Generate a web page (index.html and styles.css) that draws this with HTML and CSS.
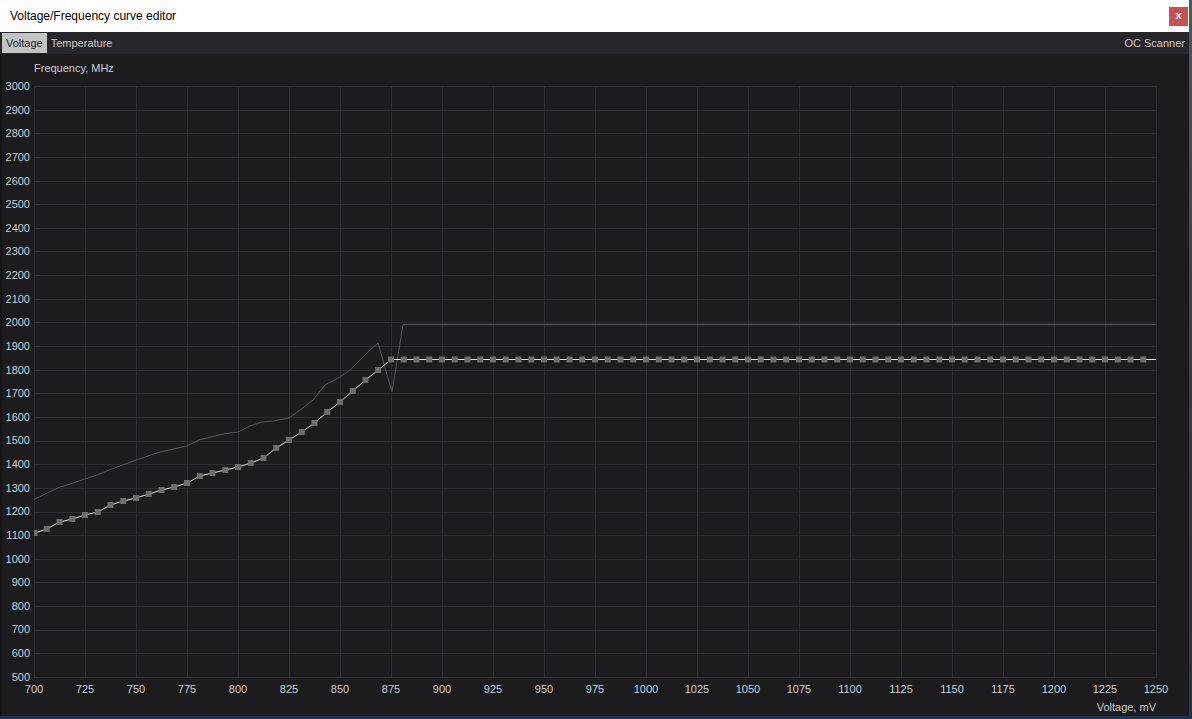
FILE: index.html
```html
<!DOCTYPE html>
<html>
<head>
<meta charset="utf-8">
<title>Voltage/Frequency curve editor</title>
<link rel="stylesheet" href="styles.css">
</head>
<body>
<div class="window">
  <div class="titlebar">
    <span class="title">Voltage/Frequency curve editor</span>
    <span class="close">x</span>
  </div>
  <div class="tabs">
    <span class="tab active">Voltage</span>
    <span class="tab">Temperature</span>
    <span class="spacer"></span>
    <span class="tab right">OC Scanner</span>
  </div>
  <div class="chart">
    <div class="ytitle">Frequency, MHz</div>
    <div class="plotrow">
      <div class="yaxis">
        <span>3000</span><span>2900</span><span>2800</span><span>2700</span><span>2600</span><span>2500</span><span>2400</span><span>2300</span><span>2200</span><span>2100</span><span>2000</span><span>1900</span><span>1800</span><span>1700</span><span>1600</span><span>1500</span><span>1400</span><span>1300</span><span>1200</span><span>1100</span><span>1000</span><span>900</span><span>800</span><span>700</span><span>600</span><span>500</span>
      </div>
      <div class="plot">
        <svg width="1123" height="592" viewBox="0 0 1123 592" xmlns="http://www.w3.org/2000/svg">
          <defs>
            <marker id="sq" markerUnits="userSpaceOnUse" markerWidth="7" markerHeight="7" refX="3.5" refY="3.5" viewBox="0 0 7 7">
              <rect x="0.5" y="0.5" width="6" height="6" fill="#6e6e6e"/>
            </marker>
          </defs>
          <g class="grid" stroke="#2d2d31" stroke-width="1" shape-rendering="crispEdges">
            <path d="M0.5 0V592M51.5 0V592M102.5 0V592M153.5 0V592M204.5 0V592M255.5 0V592M306.5 0V592M357.5 0V592M408.5 0V592M459.5 0V592M510.5 0V592M561.5 0V592M612.5 0V592M663.5 0V592M714.5 0V592M765.5 0V592M816.5 0V592M867.5 0V592M918.5 0V592M969.5 0V592M1020.5 0V592M1071.5 0V592M1122.5 0V592"/>
            <path d="M0 0.5H1123M0 24.5H1123M0 47.5H1123M0 71.5H1123M0 95.5H1123M0 118.5H1123M0 142.5H1123M0 165.5H1123M0 189.5H1123M0 213.5H1123M0 236.5H1123M0 260.5H1123M0 284.5H1123M0 307.5H1123M0 331.5H1123M0 355.5H1123M0 378.5H1123M0 402.5H1123M0 426.5H1123M0 449.5H1123M0 473.5H1123M0 496.5H1123M0 520.5H1123M0 544.5H1123M0 567.5H1123M0 591.5H1123"/>
          </g>
          <polyline fill="none" stroke="#58585c" stroke-width="1" points="0,413 1,413 26,401 33,399 63,389 75,384 102,374 126,366 153,360 165,354 189,348 204,346 216,340 228,336 240,335 255,332 266,324 279,314 291,299 306,291 316,284 326,274 336,264 344,257 358,306 369,238.5 1122,238.5"/>
          <line x1="1109.25" y1="273.5" x2="1122" y2="273.5" stroke="#e4e4e4" stroke-width="1"/>
          <polyline fill="none" stroke="#e4e4e4" stroke-width="1" marker-start="url(#sq)" marker-mid="url(#sq)" marker-end="url(#sq)" points="0.5,447 12.75,443 25.5,436 38.25,433 51,429 63.75,426 76.5,419 89.25,415 102,412 114.75,408 127.5,404 140.25,401 153,397 165.75,390 178.5,387 191.25,384 204,381 216.75,377 229.5,372 242.25,362 255,354 267.75,346 280.5,337 293.25,326 306,316 318.75,305 331.5,294 344.25,284 357,273.5 369.75,273.5 382.5,273.5 395.25,273.5 408,273.5 420.75,273.5 433.5,273.5 446.25,273.5 459,273.5 471.75,273.5 484.5,273.5 497.25,273.5 510,273.5 522.75,273.5 535.5,273.5 548.25,273.5 561,273.5 573.75,273.5 586.5,273.5 599.25,273.5 612,273.5 624.75,273.5 637.5,273.5 650.25,273.5 663,273.5 675.75,273.5 688.5,273.5 701.25,273.5 714,273.5 726.75,273.5 739.5,273.5 752.25,273.5 765,273.5 777.75,273.5 790.5,273.5 803.25,273.5 816,273.5 828.75,273.5 841.5,273.5 854.25,273.5 867,273.5 879.75,273.5 892.5,273.5 905.25,273.5 918,273.5 930.75,273.5 943.5,273.5 956.25,273.5 969,273.5 981.75,273.5 994.5,273.5 1007.25,273.5 1020,273.5 1032.75,273.5 1045.5,273.5 1058.25,273.5 1071,273.5 1083.75,273.5 1096.5,273.5 1109.25,273.5"/>
        </svg>
      </div>
    </div>
    <div class="xaxis">
      <span>700</span><span>725</span><span>750</span><span>775</span><span>800</span><span>825</span><span>850</span><span>875</span><span>900</span><span>925</span><span>950</span><span>975</span><span>1000</span><span>1025</span><span>1050</span><span>1075</span><span>1100</span><span>1125</span><span>1150</span><span>1175</span><span>1200</span><span>1225</span><span>1250</span>
    </div>
    <div class="xtitle">Voltage, mV</div>
  </div>
</div>
</body>
</html>
```

FILE: styles.css
```css
html, body {
  margin: 0;
  padding: 0;
}

body {
  width: 1192px;
  height: 719px;
  overflow: hidden;
  background: linear-gradient(180deg, #4a5866 0%, #2b3c4c 60%, #1d3550 100%);
  font-family: "Liberation Sans", Arial, sans-serif;
}

.window {
  width: 1189px;
  height: 716px;
  display: flex;
  flex-direction: column;
  background: #1c1c1f;
}

.titlebar {
  height: 32px;
  flex: 0 0 32px;
  background: #ffffff;
  display: flex;
  align-items: center;
  justify-content: space-between;
  padding: 0 1px 0 10px;
  box-sizing: border-box;
}

.title {
  font-size: 12px;
  color: #000000;
  padding-bottom: 1px;
}

.close {
  width: 19px;
  height: 19px;
  background: #c75050;
  color: #ffffff;
  font-size: 11px;
  font-weight: bold;
  line-height: 17px;
  text-align: center;
}

.tabs {
  height: 22px;
  flex: 0 0 22px;
  background: #27272b;
  display: flex;
  align-items: flex-start;
  padding-left: 2px;
  padding-top: 1px;
  box-sizing: border-box;
}

.tab {
  height: 20px;
  line-height: 20px;
  font-size: 11px;
  color: #cfcac2;
  padding: 0 4px;
}

.tab.active {
  background: #c3c3c3;
  color: #1e1e22;
}

.spacer {
  flex: 1;
}

.tab.right {
  color: #c9ccd2;
  padding-right: 4px;
}

.chart {
  flex: 1;
  border-left: 2px solid #141416;
  display: flex;
  flex-direction: column;
  color: #c9ced6;
  font-size: 11px;
}

.ytitle {
  height: 26px;
  padding: 8px 0 0 32px;
  box-sizing: border-box;
  line-height: 12px;
}

.plotrow {
  height: 603px;
  display: flex;
}

.yaxis {
  width: 32px;
  height: 603px;
  display: flex;
  flex-direction: column;
  justify-content: space-between;
  align-items: flex-end;
  padding-right: 4px;
  box-sizing: border-box;
  line-height: 12px;
}

.plot {
  padding-top: 6px;
}

.plot svg {
  display: block;
}

.xaxis {
  width: 1162px;
  margin-left: 12px;
  height: 12px;
  display: flex;
  justify-content: space-between;
  line-height: 12px;
}

.xaxis span {
  width: 40px;
  text-align: center;
}

.xtitle {
  margin-top: 6px;
  line-height: 12px;
  text-align: right;
  padding-right: 33px;
}
```
